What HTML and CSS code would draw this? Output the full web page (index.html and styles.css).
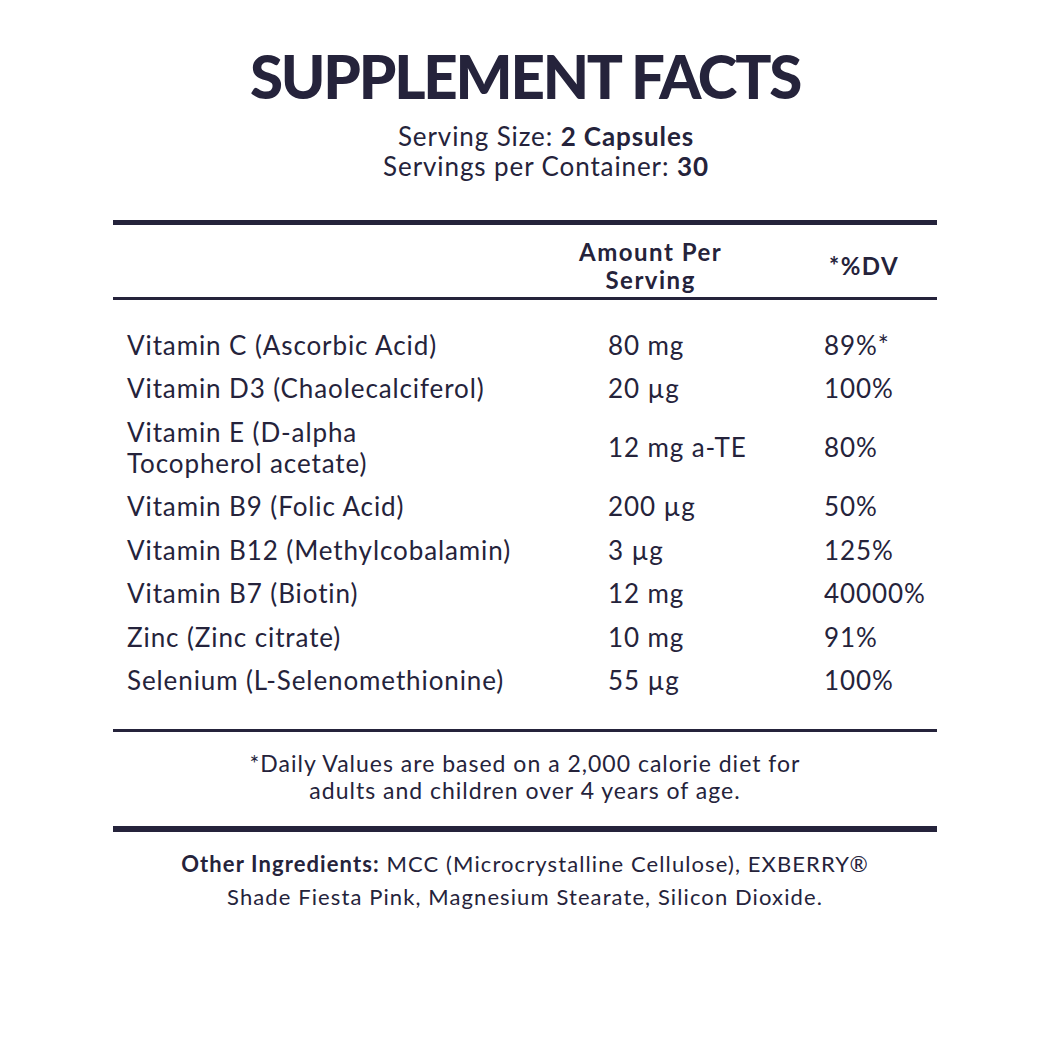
FILE: index.html
```html
<!DOCTYPE html>
<html lang="en">
<head>
<meta charset="utf-8">
<title>Supplement Facts</title>
<link rel="stylesheet" href="styles.css">
</head>
<body>
<main class="facts">
  <h1 class="title">SUPPLEMENT FACTS</h1>
  <div class="serving">
    <div>Serving Size: <b>2 Capsules</b></div>
    <div>Servings per Container: <b>30</b></div>
  </div>

  <div class="rule rule-thick"></div>
  <div class="head">
    <div></div>
    <div class="head-amount">Amount Per<br>Serving</div>
    <div class="head-dv">*%DV</div>
  </div>
  <div class="rule rule-mid"></div>

  <div class="rows">
    <div class="row"><div class="name">Vitamin C (Ascorbic Acid)</div><div class="amt">80 mg</div><div class="dv">89%*</div></div>
    <div class="row"><div class="name">Vitamin D3 (Chaolecalciferol)</div><div class="amt">20 µg</div><div class="dv">100%</div></div>
    <div class="row"><div class="name">Vitamin E (D-alpha<br>Tocopherol acetate)</div><div class="amt">12 mg a-TE</div><div class="dv">80%</div></div>
    <div class="row"><div class="name">Vitamin B9 (Folic Acid)</div><div class="amt">200 µg</div><div class="dv">50%</div></div>
    <div class="row"><div class="name">Vitamin B12 (Methylcobalamin)</div><div class="amt">3 µg</div><div class="dv">125%</div></div>
    <div class="row"><div class="name">Vitamin B7 (Biotin)</div><div class="amt">12 mg</div><div class="dv">40000%</div></div>
    <div class="row"><div class="name">Zinc (Zinc citrate)</div><div class="amt">10 mg</div><div class="dv">91%</div></div>
    <div class="row"><div class="name">Selenium (L-Selenomethionine)</div><div class="amt">55 µg</div><div class="dv">100%</div></div>
  </div>

  <div class="rule rule-thin"></div>
  <p class="note">*Daily Values are based on a 2,000 calorie diet for<br>adults and children over 4 years of age.</p>
  <div class="rule rule-heavy"></div>
  <p class="other"><b>Other Ingredients:</b> MCC (Microcrystalline Cellulose), EXBERRY®<br>Shade Fiesta Pink, Magnesium Stearate, Silicon Dioxide.</p>
</main>
</body>
</html>
```

FILE: styles.css
```css
* { box-sizing: border-box; }

html, body {
  margin: 0;
  padding: 0;
  background: #ffffff;
}

body {
  font-family: "Lato", "Open Sans", sans-serif;
  color: #25233b;
}

.facts {
  width: 824px;
  margin: 0 auto;
  padding-top: 40px;
}

.title {
  margin: 0;
  text-align: center;
  font-size: 60px;
  line-height: 72px;
  font-weight: 900;
  letter-spacing: -2.2px;
  color: #25233b;
}

.serving {
  margin-top: 9px;
  padding-left: 42px;
  text-align: center;
  font-size: 26px;
  line-height: 30px;
  letter-spacing: 0.9px;
}

.serving b { font-weight: 700; }

.rule { background: #25233b; }
.rule-thick { height: 5px; margin-top: 39px; }
.rule-mid { height: 3px; }
.rule-thin { height: 3px; }
.rule-heavy { height: 6px; }

.head {
  display: grid;
  grid-template-columns: 466px 250px 1fr;
  align-items: center;
  height: 72px;
  padding-top: 9px;
  font-size: 24px;
  line-height: 28px;
  font-weight: 700;
  letter-spacing: 1.5px;
}

.head-amount {
  justify-self: start;
  text-align: center;
}

.head-dv { justify-self: start; }

.rows {
  display: flex;
  flex-direction: column;
  gap: 12.5px;
  padding: 29.5px 0 32.5px;
}

.row {
  display: grid;
  grid-template-columns: 495px 216px 1fr;
  align-items: center;
  font-size: 26px;
  line-height: 31px;
  letter-spacing: 0.9px;
}

.name { padding-left: 14px; }

.note {
  margin: 0;
  padding: 18px 0 22px;
  text-align: center;
  font-size: 23px;
  line-height: 27px;
  letter-spacing: 1px;
}

.other {
  margin: 0;
  padding-top: 15px;
  text-align: center;
  font-size: 22px;
  line-height: 33px;
  letter-spacing: 1.1px;
}

.other b { font-weight: 700; }
```
